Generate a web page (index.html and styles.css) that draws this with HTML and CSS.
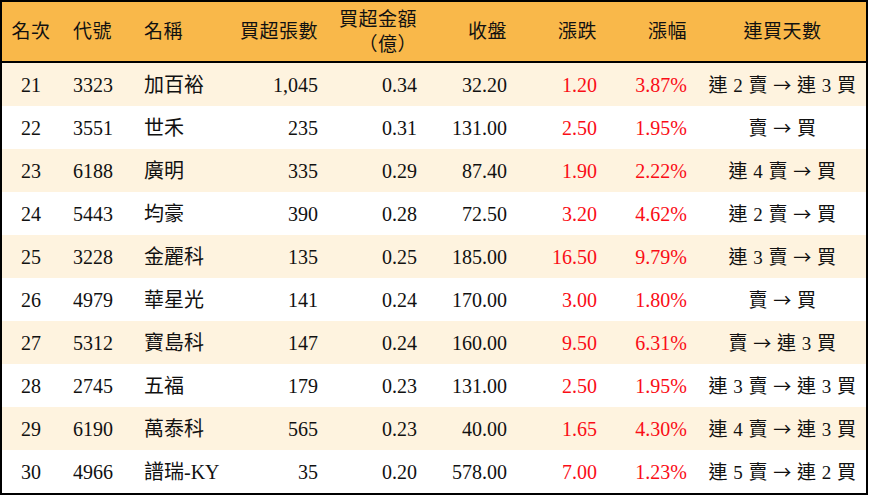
FILE: index.html
```html
<!DOCTYPE html>
<html lang="zh-Hant">
<head>
<meta charset="utf-8">
<link rel="stylesheet" href="styles.css">
</head>
<body>
<table class="rank">
  <colgroup>
    <col class="c1"><col class="c2"><col class="c3"><col class="c4"><col class="c5"><col class="c6"><col class="c7"><col class="c8"><col class="c9">
  </colgroup>
  <thead>
    <tr>
      <th class="ctr">名次</th>
      <th class="lft">代號</th>
      <th class="lft">名稱</th>
      <th class="rgt">買超張數</th>
      <th class="rgt two"><span class="l1">買超金額</span><span class="l2">（億）</span></th>
      <th class="rgt">收盤</th>
      <th class="rgt">漲跌</th>
      <th class="rgt">漲幅</th>
      <th class="ctr">連買天數</th>
    </tr>
  </thead>
  <tbody>
    <tr class="odd"><td class="ctr">21</td><td class="lft">3323</td><td class="lft">加百裕</td><td class="rgt">1,045</td><td class="rgt">0.34</td><td class="rgt">32.20</td><td class="rgt red">1.20</td><td class="rgt red">3.87%</td><td class="ctr days">連 2 賣 <span class="arr">→</span> 連 3 買</td></tr>
    <tr><td class="ctr">22</td><td class="lft">3551</td><td class="lft">世禾</td><td class="rgt">235</td><td class="rgt">0.31</td><td class="rgt">131.00</td><td class="rgt red">2.50</td><td class="rgt red">1.95%</td><td class="ctr days">賣 <span class="arr">→</span> 買</td></tr>
    <tr class="odd"><td class="ctr">23</td><td class="lft">6188</td><td class="lft">廣明</td><td class="rgt">335</td><td class="rgt">0.29</td><td class="rgt">87.40</td><td class="rgt red">1.90</td><td class="rgt red">2.22%</td><td class="ctr days">連 4 賣 <span class="arr">→</span> 買</td></tr>
    <tr><td class="ctr">24</td><td class="lft">5443</td><td class="lft">均豪</td><td class="rgt">390</td><td class="rgt">0.28</td><td class="rgt">72.50</td><td class="rgt red">3.20</td><td class="rgt red">4.62%</td><td class="ctr days">連 2 賣 <span class="arr">→</span> 買</td></tr>
    <tr class="odd"><td class="ctr">25</td><td class="lft">3228</td><td class="lft">金麗科</td><td class="rgt">135</td><td class="rgt">0.25</td><td class="rgt">185.00</td><td class="rgt red">16.50</td><td class="rgt red">9.79%</td><td class="ctr days">連 3 賣 <span class="arr">→</span> 買</td></tr>
    <tr><td class="ctr">26</td><td class="lft">4979</td><td class="lft">華星光</td><td class="rgt">141</td><td class="rgt">0.24</td><td class="rgt">170.00</td><td class="rgt red">3.00</td><td class="rgt red">1.80%</td><td class="ctr days">賣 <span class="arr">→</span> 買</td></tr>
    <tr class="odd"><td class="ctr">27</td><td class="lft">5312</td><td class="lft">寶島科</td><td class="rgt">147</td><td class="rgt">0.24</td><td class="rgt">160.00</td><td class="rgt red">9.50</td><td class="rgt red">6.31%</td><td class="ctr days">賣 <span class="arr">→</span> 連 3 買</td></tr>
    <tr><td class="ctr">28</td><td class="lft">2745</td><td class="lft">五福</td><td class="rgt">179</td><td class="rgt">0.23</td><td class="rgt">131.00</td><td class="rgt red">2.50</td><td class="rgt red">1.95%</td><td class="ctr days">連 3 賣 <span class="arr">→</span> 連 3 買</td></tr>
    <tr class="odd"><td class="ctr">29</td><td class="lft">6190</td><td class="lft">萬泰科</td><td class="rgt">565</td><td class="rgt">0.23</td><td class="rgt">40.00</td><td class="rgt red">1.65</td><td class="rgt red">4.30%</td><td class="ctr days">連 4 賣 <span class="arr">→</span> 連 3 買</td></tr>
    <tr><td class="ctr">30</td><td class="lft">4966</td><td class="lft">譜瑞-KY</td><td class="rgt">35</td><td class="rgt">0.20</td><td class="rgt">578.00</td><td class="rgt red">7.00</td><td class="rgt red">1.23%</td><td class="ctr days">連 5 賣 <span class="arr">→</span> 連 2 買</td></tr>
  </tbody>
</table>
</body>
</html>
```
FILE: styles.css
```css
html, body {
  margin: 0;
  padding: 0;
  background: #ffffff;
}
.rank {
  border-collapse: separate;
  border-spacing: 0;
  table-layout: fixed;
  width: 868px;
  border: 2px solid #000;
  font-family: "Liberation Serif", "Noto Sans CJK TC", serif;
  font-size: 20px;
  color: #111;
}
.c1 { width: 58px; }
.c2 { width: 71px; }
.c3 { width: 99px; }
.c4 { width: 100px; }
.c5 { width: 99px; }
.c6 { width: 90px; }
.c7 { width: 90px; }
.c8 { width: 90px; }
.c9 { width: 167px; }
.rank thead tr {
  background: #f9b84a;
}
.rank th {
  height: 59px;
  border-bottom: 2px solid #000;
  font-weight: normal;
  font-size: 19px;
  padding: 0;
  line-height: 24px;
  letter-spacing: 0.5px;
  vertical-align: middle;
}
.rank th.two span {
  display: block;
  line-height: 25px;
}
.rank tbody tr.odd {
  background: #fef3df;
}
.rank td {
  height: 43px;
  padding: 0;
  line-height: 24px;
  vertical-align: middle;
}
.days {
  font-size: 19px;
  letter-spacing: 0.5px;
}
.arr {
  font-family: "Noto Sans CJK TC", sans-serif;
  font-size: 18px;
}
.ctr { text-align: center; }
.lft { text-align: left; padding-left: 13px !important; }
.rgt { text-align: right; padding-right: 12px !important; }
.red { color: #fa0d16; }
```
